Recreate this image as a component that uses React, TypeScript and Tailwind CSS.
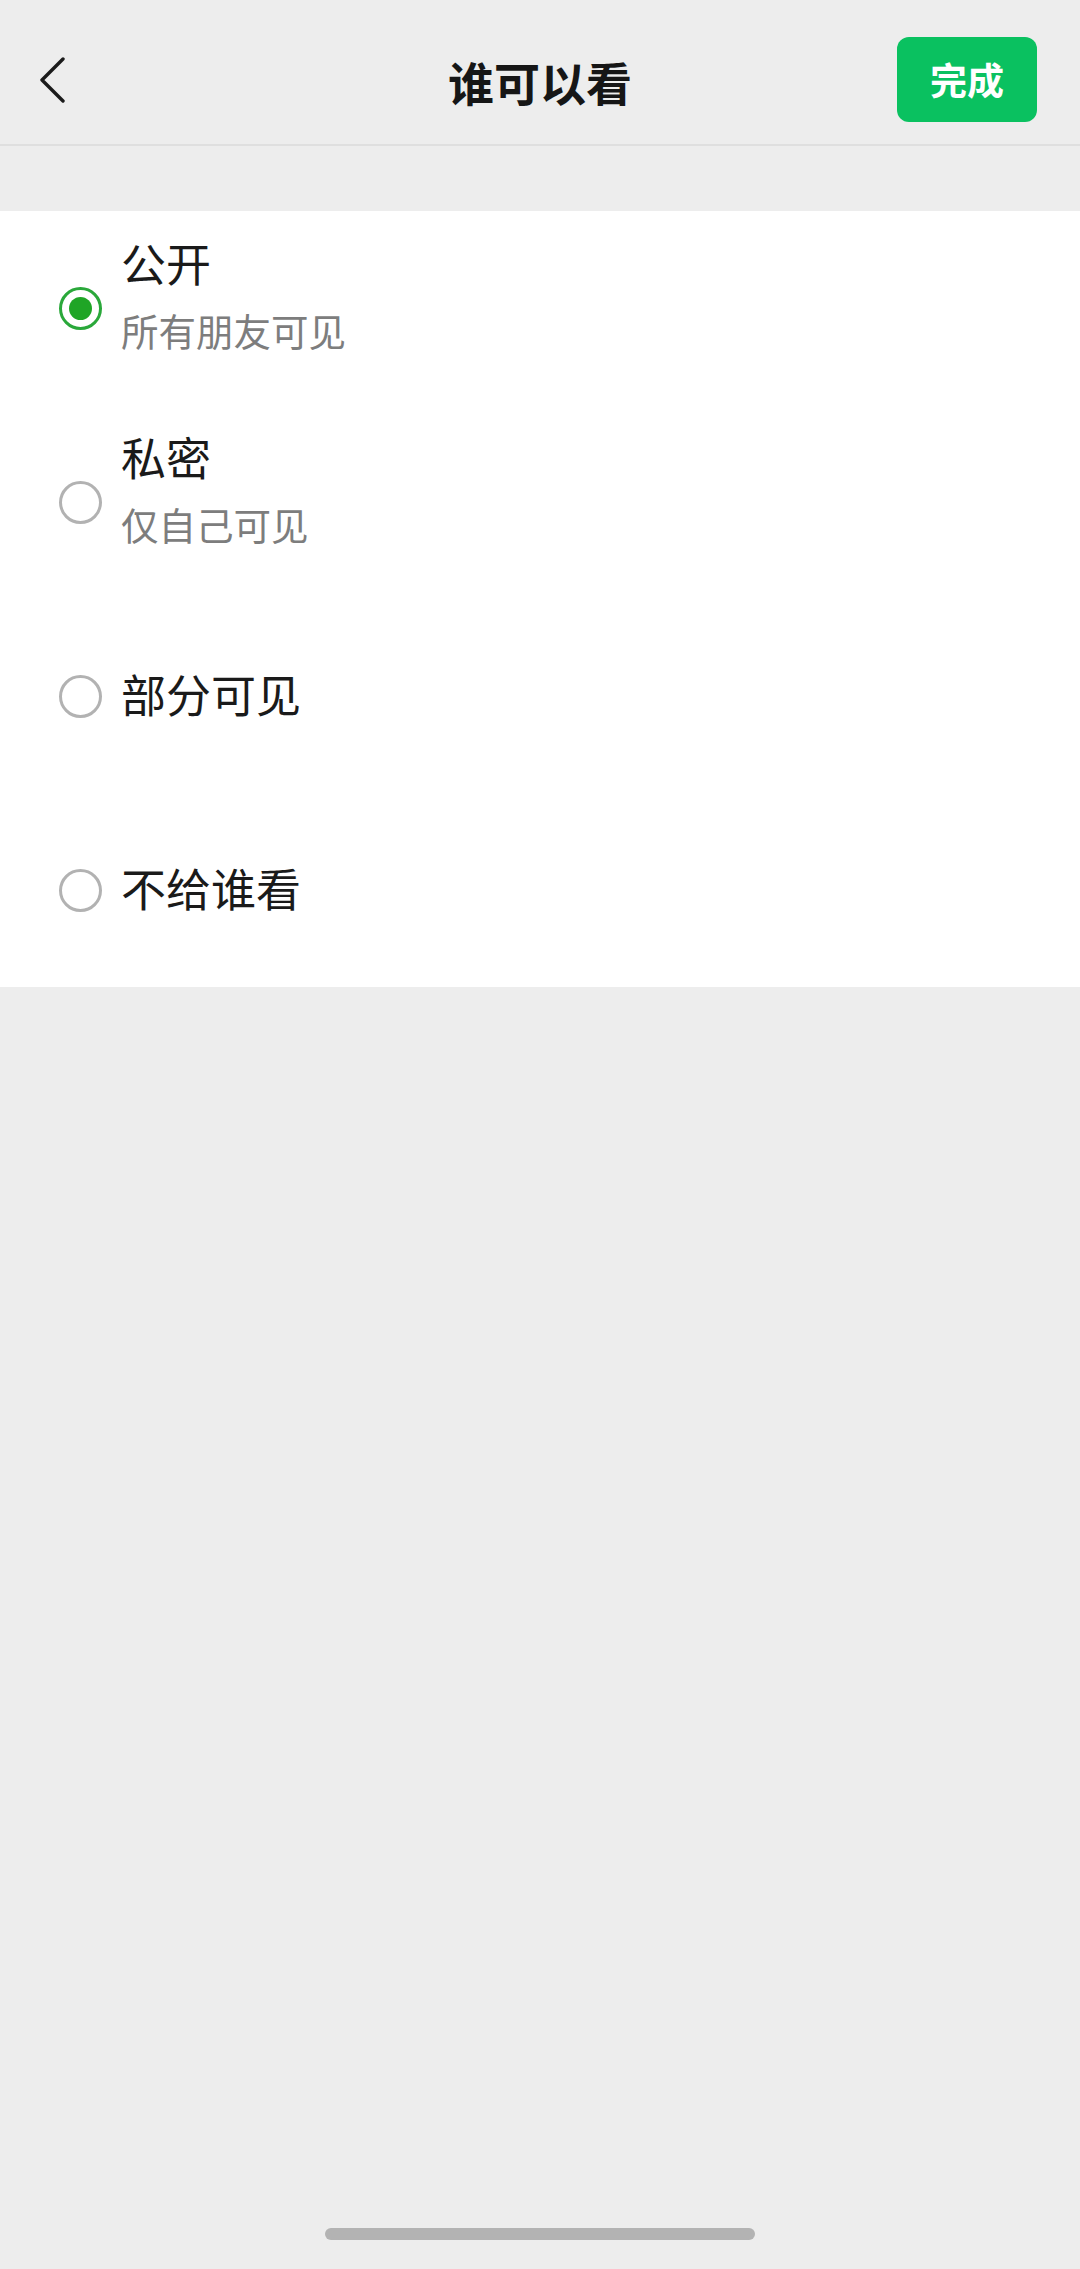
import React from "react";

type Option = { title: string; subtitle?: string };

const options: Option[] = [
  { title: "公开", subtitle: "所有朋友可见" },
  { title: "私密", subtitle: "仅自己可见" },
  { title: "部分可见" },
  { title: "不给谁看" },
];

const font = { fontFamily: '"Noto Sans CJK SC", "Noto Sans", sans-serif' };

function Radio({ checked }: { checked: boolean }) {
  if (checked) {
    return (
      <div className="w-[43px] h-[43px] rounded-full border-[3.5px] border-[#2aa83a] flex items-center justify-center shrink-0">
        <div className="w-[23px] h-[23px] rounded-full bg-[#1fa526]" />
      </div>
    );
  }
  return <div className="w-[43px] h-[43px] rounded-full border-[3px] border-[#b2b2b2] shrink-0" />;
}

export default function App() {
  const selected = 0;
  return (
    <div className="w-[1080px] h-[2269px] bg-[#ededed] flex flex-col" style={font}>
      {/* Navigation bar */}
      <div className="h-[146px] pt-[15px] flex items-center justify-between pl-[40px] pr-[43px] border-b-2 border-[#dfdfdf] relative">
        <svg width="26" height="48" viewBox="0 0 26 48">
          <path d="M23 3 L2 24 L23 45" fill="none" stroke="#1b1b1b" strokeWidth="3.4" strokeLinecap="round" strokeLinejoin="round" />
        </svg>
        <div className="absolute left-0 right-0 top-0 h-[146px] pt-[15px] flex items-center justify-center pointer-events-none">
          <span className="text-[46px] font-semibold text-[#161616] leading-none">谁可以看</span>
        </div>
        <button className="w-[140px] h-[85px] rounded-[12px] bg-[#0ac160] text-white text-[37px] font-semibold leading-none flex items-center justify-center">
          完成
        </button>
      </div>

      {/* Options list */}
      <div className="mt-[65px] bg-white flex flex-col">
        {options.map((o, i) => (
          <div key={o.title} className="h-[194px] flex items-center pl-[59px]">
            <Radio checked={i === selected} />
            <div className={`ml-[19px] flex flex-col ${o.subtitle ? "mb-[27px]" : "mb-[5px]"}`}>
              <span className="text-[45px] leading-none text-[#1a1a1a]">{o.title}</span>
              {o.subtitle && (
                <span className="mt-[26px] text-[37.5px] leading-none text-[#7d7d7d]">{o.subtitle}</span>
              )}
            </div>
          </div>
        ))}
      </div>

      <div className="flex-1" />

      {/* Home indicator */}
      <div className="h-[39px] flex justify-center">
        <div className="w-[430px] h-[12px] rounded-full bg-[#b3b3b3] mt-[-2px]" />
      </div>
    </div>
  );
}
